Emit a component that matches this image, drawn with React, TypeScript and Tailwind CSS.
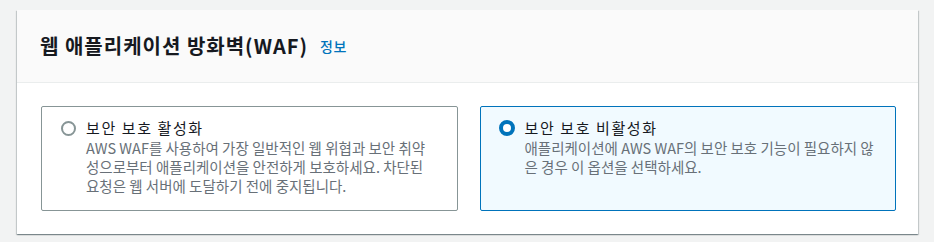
import React from 'react';

const options = [
  {
    id: 'enable',
    title: '보안 보호 활성화',
    lines: [
      'AWS WAF를 사용하여 가장 일반적인 웹 위협과 보안 취약',
      '성으로부터 애플리케이션을 안전하게 보호하세요. 차단된',
      '요청은 웹 서버에 도달하기 전에 중지됩니다.',
    ],
  },
  {
    id: 'disable',
    title: '보안 보호 비활성화',
    lines: [
      '애플리케이션에 AWS WAF의 보안 보호 기능이 필요하지 않',
      '은 경우 이 옵션을 선택하세요.',
    ],
  },
];

function Tile({ option, selected }: { option: (typeof options)[number]; selected: boolean }) {
  return (
    <div
      className={
        selected
          ? 'flex gap-[10px] rounded-[2px] border border-[#0073bb] bg-[#f1faff] pl-[18px] pr-4 pt-[11px] pb-[15px]'
          : 'flex gap-[10px] rounded-[2px] border border-[#879596] bg-white pl-[18px] pr-4 pt-[11px] pb-[15px]'
      }
    >
      <div className="flex h-5 w-[16px] shrink-0 items-center justify-center">
        {selected ? (
          <span className="block h-[16px] w-[16px] rounded-full border-[4.5px] border-[#0073bb] bg-white" />
        ) : (
          <span className="block h-[15px] w-[15px] rounded-full border-2 border-[#879596] bg-white" />
        )}
      </div>
      <div className="flex flex-col whitespace-nowrap">
        <span className="text-[15px] leading-5 tracking-[1.6px] text-[#16191f]">{option.title}</span>
        <span className="text-[14.5px] leading-[19px] text-[#687078]">
          {option.lines.map((l, i) => (
            <React.Fragment key={i}>
              {l}
              {i < option.lines.length - 1 && <br />}
            </React.Fragment>
          ))}
        </span>
      </div>
    </div>
  );
}

export default function App() {
  return (
    <div
      className="h-[242px] w-[934px] bg-[#f2f3f3] pl-[17px] pt-[10px]"
      style={{ fontFamily: '"Noto Sans CJK KR", "Noto Sans", sans-serif' }}
    >
      <div className="w-[901px] bg-white shadow-[0_1px_1px_0_rgba(0,28,36,0.3),1px_1px_1px_0_rgba(0,28,36,0.15),-1px_1px_1px_0_rgba(0,28,36,0.15)]">
        <div className="flex h-[73px] items-center gap-3 border-b border-[#eaeded] bg-[#fafafa] pl-[23px]">
          <h2 className="text-[20px] font-bold leading-6 tracking-[1px] text-[#16191f]">웹 애플리케이션 방화벽(WAF)</h2>
          <a className="text-[14px] font-medium tracking-[0.5px] text-[#0073bb]">정보</a>
        </div>
        <div className="grid grid-cols-2 gap-[22px] pl-6 pr-[22px] pt-[23px] pb-[23px]">
          {options.map((o) => (
            <Tile key={o.id} option={o} selected={o.id === 'disable'} />
          ))}
        </div>
      </div>
    </div>
  );
}
